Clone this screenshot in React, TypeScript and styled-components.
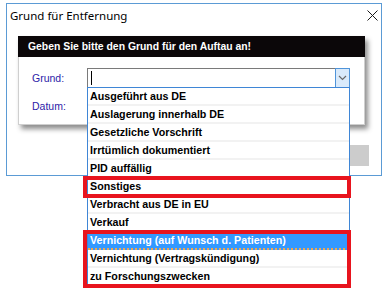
import React from "react";
import styled, { createGlobalStyle } from "styled-components";

const GlobalStyle = createGlobalStyle`
	html, body, #root {
		margin: 0;
		padding: 0;
		background: #ffffff;
		min-height: 100vh;
		overflow: visible;
	}
	body {
		font-family: "Liberation Sans", Arial, sans-serif;
		font-size: 11px;
		color: #000;
	}
`;

const reasons = [
	"Ausgeführt aus DE",
	"Auslagerung innerhalb DE",
	"Gesetzliche Vorschrift",
	"Irrtümlich dokumentiert",
	"PID auffällig",
	"Sonstiges",
	"Verbracht aus DE in EU",
	"Verkauf",
	"Vernichtung (auf Wunsch d. Patienten)",
	"Vernichtung (Vertragskündigung)",
	"zu Forschungszwecken",
];

const ROW = 18;
const selectedIndex = 8;
const marks = [
	{ from: 5, count: 1 },
	{ from: 8, count: 3 },
];

export default function App() {
	return (
		<>
			<GlobalStyle />
			<Window>
				<TitleBar>
					<Title>Grund für Entfernung</Title>
					<CloseIcon width="11" height="11" viewBox="0 0 11 11">
						<path d="M0.5 0.5 L10.5 10.5 M10.5 0.5 L0.5 10.5" />
					</CloseIcon>
				</TitleBar>
				<Body>
					<Dialog>
						<Header>Geben Sie bitte den Grund für den Auftau an!</Header>
						<Form>
							<FieldRow>
								<Label>Grund:</Label>
								<Combo>
									<Caret />
									<DropButton>
										<svg width="9" height="6" viewBox="0 0 9 6">
											<path d="M1 1 L4.5 4.5 L8 1" fill="none" stroke="#6a6a6a" strokeWidth="1.2" />
										</svg>
									</DropButton>
									<List>
										{reasons.map((reason, i) => (
											<Item key={reason} selected={i === selectedIndex}>
												{reason}
											</Item>
										))}
										{marks.map((m) => (
											<Mark
												key={m.from}
												style={{ top: m.from * ROW - 2, height: m.count * ROW + 4 }}
											/>
										))}
									</List>
								</Combo>
							</FieldRow>
							<FieldRow>
								<Label>Datum:</Label>
							</FieldRow>
						</Form>
					</Dialog>
					<Footer>
						<GrayButton />
					</Footer>
				</Body>
			</Window>
		</>
	);
}

const Window = styled.div`
	margin: 3px 0 0 6px;
	width: 376px;
	height: 173px;
	box-sizing: border-box;
	border: 1px solid #5b9bd5;
	display: flex;
	flex-direction: column;
	background: #fff;
`;

const TitleBar = styled.div`
	height: 22px;
	display: flex;
	align-items: center;
	justify-content: space-between;
	padding: 0 3px 0 3px;
`;

const Title = styled.span`
	font-family: "Noto Sans", "Liberation Sans", sans-serif;
	font-size: 11.5px;
	color: #000;
`;

const CloseIcon = styled.svg`
	stroke: #1a1a1a;
	stroke-width: 1;
	fill: none;
`;

const Body = styled.div`
	display: flex;
	flex-direction: column;
	padding: 10px 15px 0 11px;
`;

const Dialog = styled.div`
	width: 347px;
	height: 89px;
	box-sizing: border-box;
	border: 1px solid #cfcfcf;
	border-top: none;
	background: #fff;
	box-shadow: 3px 4px 5px rgba(0, 0, 0, 0.45);
	display: flex;
	flex-direction: column;
`;

const Header = styled.div`
	height: 21px;
	margin: 0 -1px;
	background: #0b0709;
	color: #fff;
	font-weight: bold;
	font-size: 10.4px;
	display: flex;
	align-items: center;
	padding-left: 10px;
`;

const Form = styled.div`
	display: flex;
	flex-direction: column;
	gap: 8px;
	padding: 11px 0 0 13px;
`;

const FieldRow = styled.div`
	display: flex;
	align-items: center;
	height: 20px;
`;

const Label = styled.span`
	width: 55px;
	color: #2d22a8;
	font-size: 10.5px;
`;

const Combo = styled.div`
	position: relative;
	width: 263px;
	height: 20px;
	box-sizing: border-box;
	border: 1px solid #7a7a7a;
	background: #fff;
	display: flex;
	justify-content: space-between;
	align-items: stretch;
`;

const Caret = styled.span`
	width: 1px;
	margin: 2px 0 2px 3px;
	background: #000;
`;

const DropButton = styled.div`
	width: 15px;
	margin: -1px -1px -1px 0;
	box-sizing: border-box;
	border: 1px solid #4f94d9;
	background: #d9eafb;
	display: flex;
	align-items: center;
	justify-content: center;
`;

const List = styled.div`
	position: absolute;
	top: 100%;
	left: -1px;
	width: 263px;
	box-sizing: border-box;
	border: 1px solid #3f86d6;
	background: #fff;
	z-index: 10;
`;

const Item = styled.div<{ selected?: boolean }>`
	height: ${ROW}px;
	box-sizing: border-box;
	padding: 0 2px;
	display: flex;
	align-items: center;
	font-weight: bold;
	font-size: 10.7px;
	white-space: nowrap;
	color: ${({ selected }) => (selected ? "#fff" : "#000")};
	background: ${({ selected }) => (selected ? "#3399ff" : "#fff")};
	border-bottom: 2px ${({ selected }) => (selected ? "dotted #f0a550" : "solid #f2f2f2")};
`;

const Mark = styled.div`
	position: absolute;
	left: -5px;
	right: -2px;
	box-sizing: border-box;
	border: 4px solid #e8141e;
	pointer-events: none;
`;

const Footer = styled.div`
	display: flex;
	justify-content: flex-end;
	margin: 20px -3px 0 0;
`;

const GrayButton = styled.div`
	width: 80px;
	height: 21px;
	background: #cccccc;
`;
